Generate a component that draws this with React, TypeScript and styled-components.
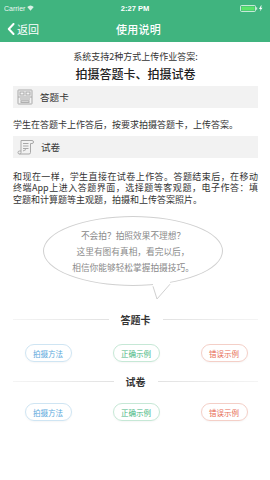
import React from "react";
import styled, { createGlobalStyle } from "styled-components";

const Global = createGlobalStyle`
  html, body { margin: 0; padding: 0; background: #fff; }
  body { font-family: "Noto Sans CJK SC", "Noto Sans", sans-serif; width: 270px; height: 480px; overflow: hidden; }
  * { box-sizing: border-box; }
`;

const GREEN = "#40b47f";

const Page = styled.div`
  width: 270px;
  height: 480px;
  background: #fff;
  display: flex;
  flex-direction: column;
`;

const Header = styled.header`
  background: ${GREEN};
  color: #fff;
  display: flex;
  flex-direction: column;
`;

const StatusBar = styled.div`
  height: 16px;
  display: grid;
  grid-template-columns: 1fr auto 1fr;
  align-items: center;
  padding: 0 4px;
  font-family: "Liberation Sans", Arial, sans-serif;
  font-size: 7px;
`;

const Carrier = styled.div`
  display: flex;
  align-items: center;
  gap: 2px;
  opacity: 0.9;
`;

const Clock = styled.div`
  font-weight: 700;
  font-size: 7.5px;
`;

const Battery = styled.div`
  justify-self: end;
  display: flex;
  align-items: center;
`;

const NavBar = styled.div`
  height: 26px;
  display: grid;
  grid-template-columns: 1fr auto 1fr;
  align-items: center;
  padding: 0 0 0 7px;
`;

const Back = styled.div`
  display: flex;
  align-items: center;
  gap: 2px;
  font-size: 11px;
`;

const Title = styled.div`
  font-size: 11px;
  font-weight: 500;
  letter-spacing: 0.2px;
`;

const Content = styled.main`
  display: flex;
  flex-direction: column;
  padding: 0 12px 0 13px;
`;

const Intro = styled.div`
  margin-top: 8px;
  text-align: center;
  font-size: 9px;
  line-height: 14px;
  color: #333;
`;

const Headline = styled.div`
  margin-top: 1px;
  text-align: center;
  font-size: 12px;
  line-height: 18px;
  color: #222;
  font-weight: 500;
`;

const SectionBar = styled.div<{ $mt: number }>`
  margin-top: ${(p) => p.$mt}px;
  height: 22px;
  background: #f2f2f2;
  display: flex;
  align-items: center;
  gap: 7px;
  padding-left: 4px;
  font-size: 9.6px;
  color: #333;
`;

const Body = styled.div<{ $mt: number }>`
  margin-top: ${(p) => p.$mt}px;
  font-size: 9px;
  line-height: 11.6px;
  color: #333;
`;

const Line = styled.div<{ $justify?: boolean }>`
  text-align: ${(p) => (p.$justify ? "justify" : "left")};
  text-align-last: ${(p) => (p.$justify ? "justify" : "left")};
  white-space: ${(p) => (p.$justify ? "normal" : "nowrap")};
`;

const BubbleWrap = styled.div`
  margin-top: 11px;
  display: flex;
  justify-content: center;
  padding-right: 5px;
  height: 82px;
`;

const Bubble = styled.div`
  position: relative;
  width: 180px;
  height: 70px;
  border: 1px solid #d0d0d0;
  border-radius: 50%;
  display: flex;
  flex-direction: column;
  align-items: center;
  justify-content: center;
  font-size: 8.7px;
  line-height: 16px;
  color: #8a8a8a;
  padding-top: 2px;
`;

const Tail = styled.svg`
  position: absolute;
  left: 104px;
  top: 60px;
`;

const Divider = styled.div<{ $mt: number }>`
  margin-top: ${(p) => p.$mt}px;
  height: 20px;
  display: flex;
  align-items: center;
  gap: 12px;
`;

const Rule = styled.div<{ $dir: "left" | "right" }>`
  flex: 1;
  height: 1px;
  background: linear-gradient(
    to ${(p) => p.$dir},
    #e2e2e2 0%,
    #f4f4f4 100%
  );
`;

const DividerText = styled.div`
  font-size: 10px;
  font-weight: 700;
  color: #333;
`;

const ButtonRow = styled.div<{ $mt: number }>`
  margin-top: ${(p) => p.$mt}px;
  margin-left: -9px;
  margin-right: -10px;
  display: grid;
  grid-template-columns: repeat(3, 1fr);
  justify-items: center;
`;

const tones = {
  blue: { fg: "#5aa9dc", bd: "#cfe5f3" },
  green: { fg: "#45b67f", bd: "#c6e8d6" },
  red: { fg: "#e66b55", bd: "#f4cfc7" },
};

const Pill = styled.div<{ $tone: keyof typeof tones }>`
  width: 47px;
  height: 18px;
  border: 1px solid ${(p) => tones[p.$tone].bd};
  border-radius: 9px;
  color: ${(p) => tones[p.$tone].fg};
  font-size: 7.5px;
  display: flex;
  align-items: center;
  justify-content: center;
  box-shadow: 0 1px 2px rgba(0, 0, 0, 0.04);
`;

const Wifi = () => (
  <svg width="7" height="6" viewBox="0 0 14 11">
    <path d="M7 11 L0.5 3.5 A9.5 9.5 0 0 1 13.5 3.5 Z" fill="#fff" opacity="0.9" />
  </svg>
);

const BatteryIcon = () => (
  <svg width="26" height="7" viewBox="0 0 26 7">
    <rect x="0.5" y="0.5" width="15" height="6" rx="1" fill="none" stroke="#fff" strokeOpacity="0.7" />
    <rect x="1.5" y="1.5" width="13" height="4" fill="#5be36b" />
    <rect x="16" y="2.3" width="1.2" height="2.4" fill="#fff" opacity="0.7" />
    <path d="M21 0.5 L19 4 L20.6 4 L19.8 6.5 L22.5 2.8 L20.8 2.8 L21.8 0.5 Z" fill="#fff" />
  </svg>
);

const Chevron = () => (
  <svg width="8" height="12" viewBox="0 0 8 12">
    <path d="M6.5 1 L1.8 6 L6.5 11" fill="none" stroke="#fff" strokeWidth="2" strokeLinecap="round" strokeLinejoin="round" />
  </svg>
);

const CardIcon = () => (
  <svg width="16" height="16" viewBox="0 0 16 16">
    <g fill="none" stroke="#a8a8a8" strokeWidth="1">
      <rect x="1" y="1" width="14" height="14" rx="0.5" />
      <rect x="3" y="3" width="4" height="3" />
      <rect x="9" y="3" width="4" height="3" />
      <line x1="1" y1="8" x2="15" y2="8" />
      <line x1="3" y1="10" x2="13" y2="10" />
      <rect x="4" y="11.8" width="8" height="1.6" />
    </g>
  </svg>
);

const PaperIcon = () => (
  <svg width="17" height="16" viewBox="0 0 17 16">
    <g fill="none" stroke="#a8a8a8" strokeWidth="1" strokeLinejoin="round">
      <path d="M4 1.5 H15 A1.5 1.5 0 0 1 15 4.5 H13.5 V13.5 A1.5 1.5 0 0 1 12 15 H2.5 A1.5 1.5 0 0 1 2.5 12 H4 Z" />
      <path d="M4 12 V13.5 A1.5 1.5 0 0 1 2.5 15" />
      <line x1="6" y1="4.5" x2="11.5" y2="4.5" />
      <line x1="6" y1="7" x2="11.5" y2="7" />
      <line x1="6" y1="9.5" x2="11.5" y2="9.5" />
      <path d="M6 12 L9 10.5" />
    </g>
  </svg>
);

const Buttons = ({ mt }: { mt: number }) => (
  <ButtonRow $mt={mt}>
    <Pill $tone="blue">拍摄方法</Pill>
    <Pill $tone="green">正确示例</Pill>
    <Pill $tone="red">错误示例</Pill>
  </ButtonRow>
);

export default function App() {
  return (
    <Page>
      <Global />
      <Header>
        <StatusBar>
          <Carrier>
            Carrier <Wifi />
          </Carrier>
          <Clock>2:27 PM</Clock>
          <Battery>
            <BatteryIcon />
          </Battery>
        </StatusBar>
        <NavBar>
          <Back>
            <Chevron />
            返回
          </Back>
          <Title>使用说明</Title>
          <div />
        </NavBar>
      </Header>
      <Content>
        <Intro>系统支持2种方式上传作业答案:</Intro>
        <Headline>拍摄答题卡、拍摄试卷</Headline>
        <SectionBar $mt={3}>
          <CardIcon />
          答题卡
        </SectionBar>
        <Body $mt={11}>
          <Line>学生在答题卡上作答后，按要求拍摄答题卡，上传答案。</Line>
        </Body>
        <SectionBar $mt={5}>
          <PaperIcon />
          试卷
        </SectionBar>
        <Body $mt={13}>
          <Line $justify>和现在一样，学生直接在试卷上作答。答题结束后，在移动</Line>
          <Line $justify>终端App上进入答题界面，选择题等客观题，电子作答：填</Line>
          <Line>空题和计算题等主观题，拍摄和上传答案照片。</Line>
        </Body>
        <BubbleWrap>
          <Bubble>
            <div>不会拍？拍照效果不理想？</div>
            <div>这里有图有真相，看完以后，</div>
            <div>相信你能够轻松掌握拍摄技巧。</div>
            <Tail width="30" height="25" viewBox="0 0 30 25">
              <polygon points="5,5 5,9.3 9,22 22,7.2 22,4" fill="#fff" />
              <polyline points="5,9.3 9,22 22,7.2" fill="none" stroke="#d0d0d0" strokeWidth="1" />
            </Tail>
          </Bubble>
        </BubbleWrap>
        <Divider $mt={11}>
          <Rule $dir="left" />
          <DividerText>答题卡</DividerText>
          <Rule $dir="right" />
        </Divider>
        <Buttons mt={15} />
        <Divider $mt={9}>
          <Rule $dir="left" />
          <DividerText>试卷</DividerText>
          <Rule $dir="right" />
        </Divider>
        <Buttons mt={12} />
      </Content>
    </Page>
  );
}
